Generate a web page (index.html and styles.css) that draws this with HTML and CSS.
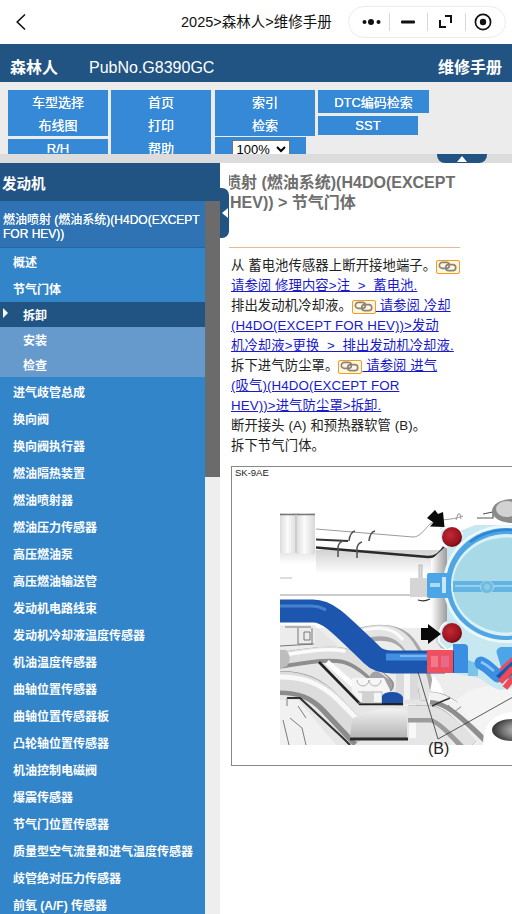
FILE: index.html
```html
<!DOCTYPE html>
<html lang="zh">
<head>
<meta charset="utf-8">
<title>维修手册</title>
<link rel="stylesheet" href="styles.css">
</head>
<body>
<div class="navbar">
  <svg class="back" width="12" height="18" viewBox="0 0 12 18"><path d="M10 1.5 2.2 9l7.8 7.5" fill="none" stroke="#111" stroke-width="1.6"/></svg>
  <div class="navtitle">2025&gt;森林人&gt;维修手册</div>
  <div class="capsule">
    <svg class="cap-icon cap-dots" width="24" height="10" viewBox="0 0 24 10"><circle cx="2.5" cy="5" r="2"/><circle cx="9" cy="5" r="3"/><circle cx="16.5" cy="5" r="2"/></svg>
    <i class="cap-sep"></i>
    <svg class="cap-icon cap-min" width="14" height="10" viewBox="0 0 14 10"><rect y="3.5" width="14" height="3" rx="1"/></svg>
    <i class="cap-sep"></i>
    <svg class="cap-icon cap-full" width="13" height="13" viewBox="0 0 13 13"><path d="M6 1h6v7M7 12H1V5" fill="none" stroke="#111" stroke-width="2"/></svg>
    <i class="cap-sep"></i>
    <svg class="cap-icon cap-rec" width="18" height="18" viewBox="0 0 18 18"><circle cx="9" cy="9" r="7.6" fill="none" stroke="#111" stroke-width="1.7"/><circle cx="9" cy="9" r="3.2"/></svg>
  </div>
</div>

<header class="brand">
  <span class="brand-model">森林人</span>
  <span class="brand-pub">PubNo.G8390GC</span>
  <span class="brand-title">维修手册</span>
</header>

<div class="toolbar">
  <div class="tcol">
    <div class="tbtn tall">车型选择<br>布线图</div>
    <div class="tbtn rh">R/H</div>
  </div>
  <div class="tcol">
    <div class="tbtn full">首页<br>打印<br>帮助</div>
  </div>
  <div class="tcol tcol-third">
    <div class="tbtn tall">索引<br>检索</div>
    <div class="tbtn zoombox"><select class="zoomsel"><option>100%</option></select></div>
  </div>
  <div class="tcol tcol-fourth">
    <div class="tbtn dtc">DTC编码检索</div>
    <div class="tbtn sst">SST</div>
  </div>
</div>
<div class="strip"><div class="strip-tab"><i class="tri-up"></i></div></div>

<main class="main">
  <aside class="side">
    <div class="side-head">发动机</div>
    <div class="side-body">
      <nav class="tree">
        <div class="tree-parent">燃油喷射 (燃油系统)(H4DO(EXCEPT FOR HEV))</div>
        <a class="ti">概述</a>
        <a class="ti">节气门体</a>
        <a class="ti sub sel">拆卸</a>
        <a class="ti sub">安装</a>
        <a class="ti sub last">检查</a>
        <a class="ti">进气歧管总成</a>
        <a class="ti">换向阀</a>
        <a class="ti">换向阀执行器</a>
        <a class="ti">燃油隔热装置</a>
        <a class="ti">燃油喷射器</a>
        <a class="ti">燃油压力传感器</a>
        <a class="ti">高压燃油泵</a>
        <a class="ti">高压燃油输送管</a>
        <a class="ti">发动机电路线束</a>
        <a class="ti">发动机冷却液温度传感器</a>
        <a class="ti">机油温度传感器</a>
        <a class="ti">曲轴位置传感器</a>
        <a class="ti">曲轴位置传感器板</a>
        <a class="ti">凸轮轴位置传感器</a>
        <a class="ti">机油控制电磁阀</a>
        <a class="ti">爆震传感器</a>
        <a class="ti">节气门位置传感器</a>
        <a class="ti">质量型空气流量和进气温度传感器</a>
        <a class="ti">歧管绝对压力传感器</a>
        <a class="ti">前氧 (A/F) 传感器</a>
      </nav>
      <div class="sbar"><div class="sthumb"></div></div>
    </div>
  </aside>
  <div class="handle"><i class="tri-left"></i></div>
  <section class="content">
    <h1 class="doc-title"><span class="first">燃油喷射 (燃油系统)(H4DO(EXCEPT</span><br>HEV)) &gt; 节气门体</h1>
    <hr class="rule">
    <p class="step">从 蓄电池传感器上断开接地端子。<span class="chain"><svg width="20" height="11" viewBox="0 0 22 12"><g fill="none" stroke="#8a8378" stroke-width="1.8"><rect x="1.5" y="1.5" width="11" height="6.5" rx="3.2"/><rect x="8.5" y="4" width="11" height="6.5" rx="3.2"/></g></svg></span><br><a class="lnk">请参阅 修理内容&gt;注 &nbsp;&gt; &nbsp;蓄电池.</a></p>
    <p class="step">排出发动机冷却液。<a class="lnk"><span class="chain"><svg width="20" height="11" viewBox="0 0 22 12"><g fill="none" stroke="#8a8378" stroke-width="1.8"><rect x="1.5" y="1.5" width="11" height="6.5" rx="3.2"/><rect x="8.5" y="4" width="11" height="6.5" rx="3.2"/></g></svg></span> 请参阅 冷却<br>(H4DO(EXCEPT FOR HEV))&gt;发动<br>机冷却液&gt;更换 &nbsp;&gt; &nbsp;排出发动机冷却液.</a></p>
    <p class="step">拆下进气防尘罩。<a class="lnk"><span class="chain"><svg width="20" height="11" viewBox="0 0 22 12"><g fill="none" stroke="#8a8378" stroke-width="1.8"><rect x="1.5" y="1.5" width="11" height="6.5" rx="3.2"/><rect x="8.5" y="4" width="11" height="6.5" rx="3.2"/></g></svg></span> 请参阅 进气<br>(吸气)(H4DO(EXCEPT FOR<br>HEV))&gt;进气防尘罩&gt;拆卸.</a></p>
    <p class="step">断开接头 (A) 和预热器软管 (B)。</p>
    <p class="step">拆下节气门体。</p>
    <figure class="fig">
      <svg class="fig-svg" width="281" height="298" viewBox="232 467 281 298">
        <defs>
          <filter id="soft" x="-5%" y="-5%" width="110%" height="110%"><feGaussianBlur stdDeviation="0.6"/></filter>
          <linearGradient id="cyl" x1="0" x2="1" y1="0" y2="0"><stop offset="0" stop-color="#dcdcdc"/><stop offset=".45" stop-color="#fbfbfb"/><stop offset="1" stop-color="#d8d8d8"/></linearGradient>
          <linearGradient id="fade" x1="0" x2="0" y1="0" y2="1"><stop offset="0" stop-color="#a8a8a8"/><stop offset="1" stop-color="#fff"/></linearGradient>
          <linearGradient id="wedge" x1="0" x2="0" y1="0" y2="1"><stop offset="0" stop-color="#f2f2f2"/><stop offset="1" stop-color="#b4b4b4"/></linearGradient>
          <linearGradient id="shade" x1="0" x2="1" y1="0" y2="0"><stop offset="0" stop-color="#fff"/><stop offset="1" stop-color="#9c9c9c"/></linearGradient>
          <radialGradient id="bolt" cx=".4" cy=".4" r=".65"><stop offset="0" stop-color="#c22a34"/><stop offset=".7" stop-color="#9c1420"/><stop offset="1" stop-color="#6e0d14"/></radialGradient>
          <radialGradient id="hole" cx=".65" cy=".5" r=".6"><stop offset="0" stop-color="#c9c9c9"/><stop offset=".6" stop-color="#7a7a7a"/><stop offset="1" stop-color="#3c3c3c"/></radialGradient>
          <clipPath id="pic"><rect x="280" y="498" width="233" height="247"/></clipPath>
        </defs>
        <g clip-path="url(#pic)">
          <g filter="url(#soft)">
            <!-- upper rail -->
            <rect x="316" y="550" width="125" height="24" fill="url(#fade)" opacity=".5"/>
            <rect x="280" y="550" width="36" height="14" fill="url(#fade)" opacity=".35"/>
            <rect x="280" y="513" width="17" height="40" fill="url(#cyl)"/>
            <rect x="296" y="513" width="19" height="41" fill="url(#cyl)"/>
            <path d="M280 514.5h35" stroke="#777" stroke-width="1.6"/>
            <path d="M296 513v40" stroke="#bbb"/>
            <path d="M316 529 413 537 C420 537 424 530 430 524 C440 518 450 521 463 516" fill="none" stroke="#8f8f8f" stroke-width=".9"/>
            <path d="M316 539.5 348 541" stroke="#333" stroke-width="2"/>
            <path d="M316 547.5 428 557 C436 557 440 553 444 547" fill="none" stroke="#2c2c2c" stroke-width="2.4"/>
            <path d="M349 541q1-9 6-10M369 541q1-9 6-10M338 557v-10q1-5 5-6M357 558v-10q1-5 5-6" fill="none" stroke="#555" stroke-width="1.6"/>
            <path d="M477 518h16v-6l-10 2" fill="none" stroke="#555" stroke-width="1.2"/>
            <path d="M456 520l2-6h2l1 5" fill="none" stroke="#999"/>
            <ellipse cx="512" cy="511" rx="20" ry="12" fill="#8a8a8a"/>
            <ellipse cx="507" cy="509" rx="11" ry="8" fill="#d2d2d2"/>
            <!-- mid tube lines -->
            <path d="M280 578h12" stroke="#bbb"/>
            <path d="M280 595H412" stroke="#999" stroke-width="1"/>
            <path d="M431 560 447 545V650L431 645Z" fill="url(#shade)"/>
            <rect x="419" y="565" width="3" height="14" fill="#ddd" stroke="#999" stroke-width=".6"/>
            <rect x="410" y="578" width="18" height="19" fill="#d5d5d5"/>
            <path d="M418 600q6 2 12-1" stroke="#333" fill="none" stroke-width="1.2"/>

            <!-- lower engine base -->
            <path d="M352 628 H425 L450 660 L512 680 V745 H280 V628Z" fill="#ededed"/>
            <path d="M280 626h35l40 34 30 26 45 8 20 40v11H280Z" fill="#e2e2e2" opacity=".7"/>

            <!-- arch pipe behind hose -->
            <g fill="none">
              <path d="M360 636C380 630 398 632 408 644C418 656 424 675 428 700" stroke="#a8a8a8" stroke-width="16"/>
              <path d="M360 634C380 628 396 630 406 642C416 654 422 674 426 700" stroke="#e4e4e4" stroke-width="11"/>
              <path d="M360 631C378 626 394 628 403 640" stroke="#fafafa" stroke-width="3"/>
            </g>
            <rect x="396" y="672" width="22" height="34" fill="#dadada"/>
            <rect x="404" y="672" width="6" height="34" fill="#f4f4f4"/>
            <path d="M433 675q9 10 12 24l-17 4z" fill="#fff"/>

            <!-- left connector -->
            <rect x="280" y="625" width="35" height="24" fill="#ececec"/>
            <path d="M285 627h26M298 628v16h14v-16M304 632h6v8h-6zM280 646l34-2" fill="none" stroke="#777" stroke-width="1"/>

            <!-- pipe A -->
            <g fill="none" stroke-linecap="round">
              <path d="M276 661C300 658 325 652 344 656C360 660 372 672 386 685" stroke="#8e8e8e" stroke-width="16"/>
              <path d="M276 659C300 656 325 650 344 654C360 658 372 670 384 682" stroke="#dedede" stroke-width="12"/>
              <path d="M276 656C300 653 325 647 344 651" stroke="#fbfbfb" stroke-width="3.5"/>
              <path d="M376 678 386 685" stroke="#a2a2a2" stroke-width="13"/>
            </g>
            <path d="M280 650h6q7 8 1 16l-7 3z" fill="#bdbdbd"/>

            <!-- pipe C, lower left -->
            <g fill="none">
              <path d="M280 683C300 683 315 688 330 704L362 738" stroke="#8c8c8c" stroke-width="24"/>
              <path d="M280 681C300 681 316 686 332 702L364 736" stroke="#dcdcdc" stroke-width="19"/>
              <path d="M280 677C302 677 318 682 336 698L360 722" stroke="#f9f9f9" stroke-width="5"/>
            </g>
            <path d="M287 698H300L343 738 350 745" fill="none" stroke="#333" stroke-width="2.2"/>
            <path d="M280 700H298L336 745H280Z" fill="#f1f1f1"/>
            <path d="M290 718l12 10 4 17M298 706l8 12M283 720l6 25M287 698v8" fill="none" stroke="#7c7c7c" stroke-width="1"/>

            <!-- black rail -->
            <path d="M319 662 360 704H403" fill="none" stroke="#222" stroke-width="2.6"/>
            <path d="M327 662 368 698" stroke="#fff" stroke-width="5"/>

            <!-- wedge -->
            <path d="M352 719C372 706 392 708 407 710V738H350Z" fill="url(#wedge)"/>
            <path d="M350 739H408" stroke="#2a2a2a" stroke-width="3"/>

            <!-- small bracket + blue -->
            <path d="M352 678h32l6 12v13h-28l-10-12z" fill="#f6f6f6"/>
            <path d="M357 680a6 6 0 0 0 12 0M369 680a6 6 0 0 0 12 0M358 692h24v11h-24" fill="none" stroke="#aaa" stroke-width=".9"/>
            <rect x="362" y="692" width="12" height="11" fill="#d2d2d2"/>
            <path d="M382 696q2-4 10-4t11 5v6h-21z" fill="#1c4fa8"/>
            <rect x="409" y="700" width="7" height="38" fill="#f8f8f8"/>
            <path d="M403 702h18" stroke="#e4e4e4" stroke-width="5"/>

            <!-- lower right pipes -->
            <g fill="none">
              <path d="M408 714H430C440 714 452 728 470 747" stroke="#9c9c9c" stroke-width="17"/>
              <path d="M408 712H430C440 712 454 726 472 745" stroke="#e2e2e2" stroke-width="12"/>
              <path d="M430 698C445 698 458 708 490 740" stroke="#8e8e8e" stroke-width="13"/>
              <path d="M430 696C445 696 460 706 492 738" stroke="#f2f2f2" stroke-width="8"/>
            </g>
            <path d="M448 705 470 725M454 712l8-6 12 15" fill="none" stroke="#888" stroke-width="1"/>
            <path d="M432 706q8-4 18-8" stroke="#333" stroke-width="1.5" fill="none"/>
            <path d="M470 690 512 680V746H492L456 700Z" fill="#f4f4f4"/>
            <path d="M483 745C483 722 495 714 512 712V745Z" fill="#fff"/>
            <ellipse cx="512" cy="730" rx="20" ry="11" fill="url(#hole)"/>

            <!-- throttle body -->
            <path d="M440 528 C446 525 452 524 460 531 L475 525 H513 V688 L500 690 C488 686 484 680 478 678 L470 676 L455 674 L453 645 L441 640 L447 623 L447 546 L441 538Z" fill="#c7e8f1"/>
            <ellipse cx="506" cy="584" rx="63" ry="59" fill="#eaf7fb"/>
            <ellipse cx="506" cy="584" rx="60" ry="56" fill="#4fa6e2"/>
            <ellipse cx="507" cy="585" rx="56" ry="51" fill="#d9f0f7"/>
            <ellipse cx="507" cy="585" rx="54" ry="47.5" fill="#a7dae6"/>
            <path d="M470 542A60 56 0 0 1 513 530" stroke="#2f86d3" stroke-width="2.5" fill="none"/>
            <rect x="427" y="573" width="24" height="25" rx="2" fill="#4ba5e6"/>
            <rect x="430" y="583" width="10" height="4" fill="#a9dcf5"/>
            <rect x="442" y="577" width="4" height="16" fill="#c8e6f3"/>
            <rect x="453" y="581" width="60" height="11" fill="#64b4e2"/>
            <path d="M455 586H513" stroke="#a7dcf0" stroke-width="1.4"/>
            <circle cx="487" cy="587" r="6.5" fill="#6fbbe3" stroke="#a5d8ea"/>
            <circle cx="487" cy="587" r="3" fill="#8ecbe4"/>
            <path d="M447 548q-10-10-6-18q6-5 14-2l8 6" fill="#c9ebf4" stroke="#fff" stroke-width="1.5"/>
            <path d="M447 622q-9 3-8 20l8 8 14-6" fill="#c9ebf4" stroke="#fff" stroke-width="1.5"/>
            <circle cx="452" cy="537" r="10" fill="url(#bolt)"/>
            <circle cx="452" cy="633" r="10" fill="url(#bolt)"/>

            <!-- hose -->
            <path d="M280 611H313C328 611 338 622 372 655C378 661 385 662 392 662H445" fill="none" stroke="#1d57ae" stroke-width="23"/>
            <path d="M280 606H312C319 606 322 608 326 610" fill="none" stroke="#4d8dd8" stroke-width="3" opacity=".8"/>
            <path d="M386 657H430" stroke="#3f8fe3" stroke-width="7"/>
            <path d="M400 656H428" stroke="#8cc0f0" stroke-width="1.6"/>
            <path d="M453 644h11q4 0 4 4v25h-15z" fill="#3b8fe2"/>
            <path d="M446 651h8v22h-8z" fill="#1a4ca0"/>
            <path d="M468 660 478 664V676H468Z" fill="#7cc3e8"/>
            <rect x="427" y="651" width="26" height="22" fill="#d85a80"/>
            <g fill="#f2505c">
              <rect x="427" y="650" width="26" height="5"/>
              <rect x="427" y="668" width="26" height="5"/>
              <rect x="427" y="650" width="4" height="23"/>
              <rect x="438" y="650" width="3" height="23"/>
              <rect x="449" y="650" width="4" height="23"/>
            </g>
            <rect x="431" y="656" width="7" height="11" fill="#f2798a"/>
            <rect x="441" y="656" width="8" height="11" fill="#e86a88"/>

            <!-- small hose right -->
            <path d="M481 663C488 666 492 672 498 676" stroke="#3b8fe2" stroke-width="13" stroke-linecap="round" fill="none"/>
            <path d="M481 662 C486 664 490 668 494 671" stroke="#8dc6f2" stroke-width="2.5" fill="none"/>
            <path d="M497 654q-2-5 4-7h12v30l-8 3z" fill="#4ba5e6"/>
            <path d="M496 676 513 660V674L503 682Z" fill="#1d57ae"/>
            <path d="M500 682 513 668M505 688 513 678" stroke="#ef4a57" stroke-width="6" fill="none"/>
            <path d="M500 670l13-12" stroke="#ef4a57" stroke-width="3"/>
          </g>
          <!-- arrows -->
          <path d="M427 518 435 510 438 514 443 512 444.5 527 430 526.5 433.5 522.5Z" fill="#0a0a0a"/>
          <path d="M421 628H428V624L441 634 428 644V640H421Z" fill="#0a0a0a"/>
          <path d="M418 672 438 739 513 697" fill="none" stroke="#333" stroke-width=".8"/>
        </g>
        <text class="fig-code" x="235" y="476">SK-9AE</text>
        <text class="fig-lbl" x="428" y="754">(B)</text>
      </svg>
    </figure>
  </section>
</main>
</body>
</html>
```
FILE: styles.css
```css
* { box-sizing: border-box; }
html, body { margin: 0; height: 914px; overflow: hidden; }
body { width: 512px; font-family: "Liberation Sans", "Noto Sans CJK SC", sans-serif; background: #fff; color: #222; }

.navbar { height: 44px; display: flex; align-items: center; background: #fff; }
.back { margin-left: 15px; flex: none; }
.navtitle { margin-left: 154px; width: 167px; font-size: 14.5px; color: #111; white-space: nowrap; margin-top: -4px; }
.capsule { width: 158px; height: 32px; border: 1px solid #ececec; border-radius: 16px; display: flex; align-items: center; margin-top: -1px; padding-left: 13px; }
.cap-icon { flex: none; fill: #111; }
.cap-sep { width: 1px; height: 18px; background: #d8d8d8; flex: none; }
.cap-dots { margin-right: 3px; }
.cap-min { margin: 0 12px 0 11px; }
.cap-full { margin: 0 13px 0 11px; }
.cap-rec { margin-left: 8px; }

.brand { height: 38px; background: #225483; color: #fff; display: flex; align-items: baseline; padding: 14px 10px 0; font-size: 16px; line-height: 20px; }
.brand-model { font-weight: bold; width: 79px; }
.brand-pub { flex: 1; }
.brand-title { font-weight: bold; }

.toolbar { height: 72px; background: #ececec; padding: 8px 8px 0; display: flex; overflow: hidden; align-items: flex-start; gap: 3px; }
.tcol { width: 100px; display: flex; flex-direction: column; gap: 3px; flex: none; }
.tcol-third { margin-left: 1px; gap: 1px; }
.tcol-fourth { width: 111px; }
.tbtn { background: #3589d6; color: #fff; text-align: center; font-size: 13px; line-height: 23px; flex: none; padding-top: 1px; text-shadow: 0 0 .6px #fff; }
.tall { height: 46px; }
.full { height: 69px; }
.rh { height: 20px; line-height: 19px; padding-top: 0; }
.zoombox { width: 91px; height: 30px; line-height: 1; padding-top: 3px; }
.zoomsel { width: 58px; height: 19px; font: 13px "Liberation Sans", sans-serif; background: #fff; color: #000; border: 1px solid #767676; padding: 0; }
.dtc { height: 23px; width: 111px; }
.sst { width: 100px; height: 19px; line-height: 19px; padding-top: 0; }

.strip { height: 9px; background: #dcdcdc; position: relative; }
.strip-tab { position: absolute; left: 437px; top: 0; width: 50px; height: 9px; background: #225483; border-radius: 0 0 8px 8px; display: flex; justify-content: center; padding-top: 2px; }
.tri-up { width: 0; height: 0; border: 5px solid transparent; border-top: 0; border-bottom: 6px solid #fff; }

.main { display: flex; height: 751px; position: relative; }
.side { width: 220px; flex: none; display: flex; flex-direction: column; }
.side-head { height: 38px; background: #225483; color: #fff; font-size: 14.5px; font-weight: bold; line-height: 42px; padding-left: 2px; }
.side-body { display: flex; flex: 1; min-height: 0; }
.tree { width: 205px; flex: none; background: #3385c9; }
.tree-parent { height: 47px; background: #2f73b5; border-bottom: 1px solid #2a64a0; color: #fff; font-size: 12px; line-height: 14px; padding: 12px 3px 0; text-shadow: 0 0 .6px #fff; }
.ti { display: block; height: 27px; line-height: 24px; padding-top: 3px; font-size: 12px; color: #fff; padding-left: 13px; font-weight: bold; }
.sub { height: 25px; line-height: 22px; padding-left: 23px; background: #6699cc; }
.sub.last { margin-bottom: 1px; }
.sel { background: #225483; position: relative; }
.sel::before { content: ""; position: absolute; left: 3px; top: 6px; border: 5px solid transparent; border-left: 5px solid #fff; border-right: 0; }
.sbar { width: 15px; flex: none; background: #eeeeee; }
.sthumb { height: 276px; background: #6b6b6b; }

.handle { position: absolute; left: 220px; top: 25px; width: 9px; height: 50px; background: #225483; border-radius: 0 7px 7px 0; display: flex; align-items: center; padding-left: 2px; }
.tri-left { width: 0; height: 0; border: 5px solid transparent; border-left: 0; border-right: 6px solid #fff; }

.content { flex: 1; min-width: 0; margin-left: 9px; overflow: hidden; font-size: 13.33px; letter-spacing: .1px; color: #222; }
.doc-title { margin: 10px 0 0; padding-left: 1px; font-size: 16px; line-height: 20px; font-weight: bold; color: #6e6e6e; height: 74px; white-space: nowrap; letter-spacing: 0; }
.first { margin-left: -37px; }
.rule { margin: 0; width: 231px; height: 1px; border: 0; background: #e8b98e; }
.step { margin: 0 0 0 2px; line-height: 20px; white-space: nowrap; }
.rule + .step { margin-top: 8px; }
.lnk { color: #1a1acb; text-decoration: underline; }
.chain { display: inline-flex; width: 24px; height: 14px; border: 1px solid #f79a1e; border-radius: 2px; background: #fff6e4; align-items: center; justify-content: center; vertical-align: -2px; margin-left: 0; }
.fig { margin: 10px 0 0 2px; width: 282px; height: 300px; border: 1px solid #888; border-right: 0; background: #fff; }
.fig-svg { display: block; }
.fig-code { font-size: 9.5px; fill: #222; letter-spacing: 0; }
.fig-lbl { font-size: 16px; fill: #222; letter-spacing: 0; }
```
